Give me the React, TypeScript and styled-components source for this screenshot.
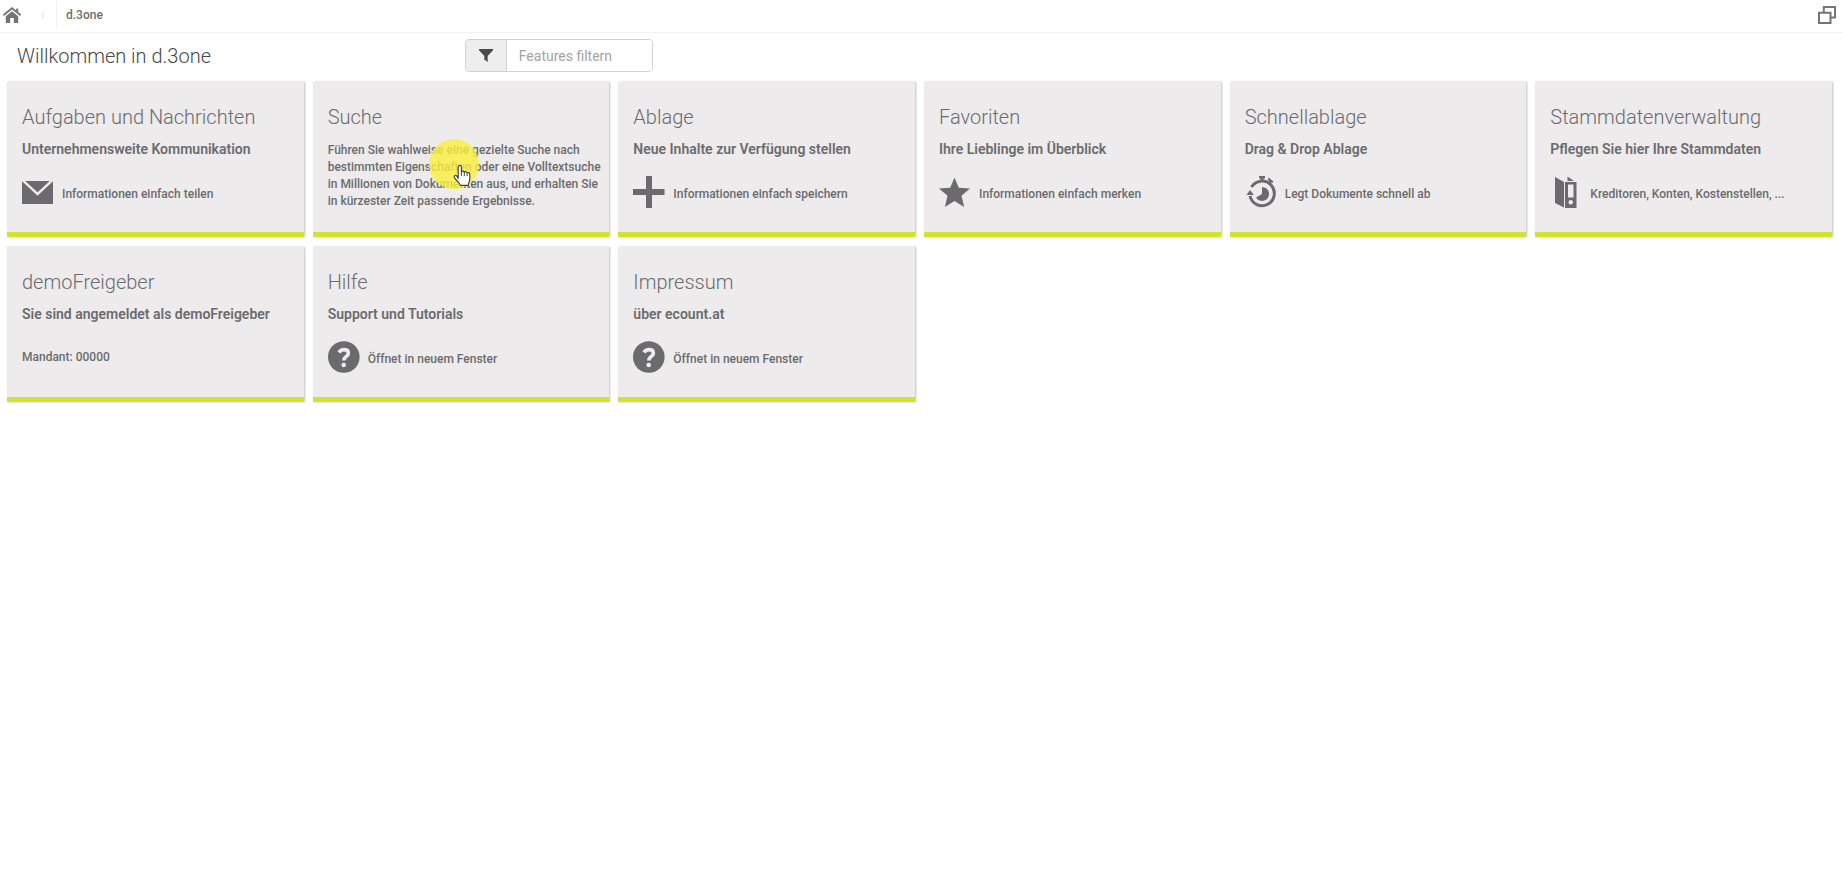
import React from "react";
import styled, { createGlobalStyle } from "styled-components";

const GlobalStyle = createGlobalStyle`
  *, *::before, *::after { box-sizing: border-box; }
  body {
    margin: 0;
    background: #fff;
    color: #6b6b6e;
    font-family: Roboto, "Liberation Sans", sans-serif;
  }
`;

const TopBar = styled.header`
  display: flex;
  align-items: center;
  height: 33px;
  padding: 0 7px 3px 2px;
  border-bottom: 1px solid #f2f2f2;
`;

const IconButton = styled.button`
  display: flex;
  padding: 0;
  border: 0;
  background: none;
  color: #757575;
  cursor: pointer;
`;

const Back = styled(IconButton)`
  margin: 0 11px 0 19px;
  color: #dcdcdc;
`;

const Crumb = styled.a`
  padding-left: 9px;
  border-left: 1px solid #f0f0f0;
  color: #6e6e6e;
  font-size: 12px;
  font-weight: 500;
  line-height: 28px;
  text-decoration: none;
`;

const Spacer = styled.div`
  flex: 1;
`;

const HeadingRow = styled.div`
  display: grid;
  grid-template-columns: 1fr 3fr;
  align-items: center;
  padding: 6px 0 10px;
`;

const Heading = styled.h1`
  margin: 0;
  padding-left: 17px;
  color: #484848;
  font-size: 20px;
  font-weight: 300;
  line-height: 24px;
`;

const Filter = styled.label`
  display: flex;
  width: 188px;
  height: 33px;
  margin-left: 4px;
  overflow: hidden;
  border: 1px solid #d2d2d2;
  border-radius: 4px;
`;

const FilterAddon = styled.span`
  display: flex;
  flex: none;
  align-items: center;
  justify-content: center;
  width: 41px;
  border-right: 1px solid #d2d2d2;
  background: #eee;
  color: #4a4a4a;
`;

const FilterInput = styled.input`
  flex: 1;
  min-width: 0;
  padding: 0 12px;
  border: 0;
  outline: 0;
  color: #555;
  font: 400 14px Roboto, "Liberation Sans", sans-serif;
  &::placeholder { color: #a3a3a3; opacity: 1; }
`;

const Tiles = styled.main`
  display: grid;
  grid-template-columns: repeat(6, 1fr);
  gap: 10px 9px;
  padding: 0 11px 8px 7px;
`;

const Tile = styled.a`
  position: relative;
  display: block;
  min-height: 155px;
  padding: 23px 8px 19px 15px;
  border-bottom: 5px solid #d1e231;
  background: #edebec;
  box-shadow: 1px 0 2px rgba(0, 0, 0, 0.25);
  color: inherit;
  text-decoration: none;
`;

const TileTitle = styled.h2`
  margin: 0 0 10px;
  color: #6b6b6e;
  font-size: 20px;
  font-weight: 300;
  line-height: 24px;
`;

const TileSubtitle = styled.p`
  margin: 0 0 17px;
  font-size: 14px;
  font-weight: 600;
  line-height: 20px;
`;

const TileText = styled.p`
  margin: 0;
  padding-top: 3px;
  font-size: 12px;
  font-weight: 500;
  line-height: 17px;
`;

const Meta = styled.div`
  display: flex;
  align-items: flex-end;
  gap: 8px;
  height: 32px;
  font-size: 12px;
  font-weight: 500;
`;

const MetaText = styled.span<{ $plain?: boolean }>`
  line-height: ${(p) => (p.$plain ? 32 : 28)}px;
  white-space: nowrap;
`;

const Highlight = styled.span`
  position: absolute;
  top: 57px;
  left: 116px;
  width: 50px;
  height: 50px;
  border-radius: 50%;
  background: rgba(250, 240, 60, 0.8);
`;

const Pointer = styled.svg`
  position: absolute;
  top: 25px;
  left: 23px;
`;

const paths = {
  mail: (
    <>
      <path d="M0 5h31v23H0z" />
      <path d="M0 3.500L15.500 18 31 3.500" fill="none" stroke="#edebec" strokeWidth="2.400" />
      <path d="M3.500 5h24L15.500 16z" />
    </>
  ),
  plus: <path d="M13 0h6v13h12.500v6H19v13h-6V19H0v-6h13z" />,
  star: <path d="M15.500 1.500l4.300 10.200 11.200.9-8.500 7.200 2.700 11.200-9.700-6-9.600 6 2.600-11.200L0 12.600l11.200-.9z" />,
  watch: (
    <>
      <path d="M14 0h6v2.500h-1.500V6h-3V2.500H14zM23.500 1.500l5 4-1.200 1.500-1.300-.6-1.700 2-2-1.700 1.500-2-.8-1.200z" />
      <path d="M6.500 11A12.300 12.300 0 1 1 5 20" fill="none" stroke="currentColor" strokeWidth="3" />
      <path d="M1.500 19l3.500-5 4 5z" />
      <path d="M17 11a7 7 0 1 1-6 10.500l6-3.500z" />
    </>
  ),
  binder: (
    <>
      <path d="M5 1l9 5v25.500l-9-4.500zM17.500.500L24 5h-6.500z" />
      <path fillRule="evenodd" d="M15 6h11.500v26H15zM18 8.500v13h5.500v-13zM20.750 24a2.250 2.250 0 1 0 0 4.500 2.250 2.250 0 0 0 0-4.500z" />
    </>
  ),
  help: (
    <>
      <circle cx="15.800" cy="16" r="15.800" />
      <path d="M11 11.500c1.200-2 2.800-2.900 5-2.900 2.800 0 4.400 1.500 4.400 3.600 0 3.200-4.600 3.400-4.600 7.300" fill="none" stroke="#edebec" strokeWidth="3.600" />
      <circle cx="15.700" cy="24" r="2.300" fill="#edebec" />
    </>
  ),
};

type IconName = keyof typeof paths;

const TileIcon = ({ name }: { name: IconName }) => (
  <svg width="32" height="32" viewBox="0 0 32 32" fill="currentColor" aria-hidden="true">
    {paths[name]}
  </svg>
);

interface TileData {
  title: string;
  subtitle?: string;
  text?: string;
  icon?: IconName;
  meta?: string;
  active?: boolean;
}

const tiles: TileData[] = [
  { title: "Aufgaben und Nachrichten", subtitle: "Unternehmensweite Kommunikation", icon: "mail", meta: "Informationen einfach teilen" },
  {
    title: "Suche",
    text: "Führen Sie wahlweise eine gezielte Suche nach bestimmten Eigenschaften oder eine Volltextsuche in Millionen von Dokumenten aus, und erhalten Sie in kürzester Zeit passende Ergebnisse.",
    active: true,
  },
  { title: "Ablage", subtitle: "Neue Inhalte zur Verfügung stellen", icon: "plus", meta: "Informationen einfach speichern" },
  { title: "Favoriten", subtitle: "Ihre Lieblinge im Überblick", icon: "star", meta: "Informationen einfach merken" },
  { title: "Schnellablage", subtitle: "Drag & Drop Ablage", icon: "watch", meta: "Legt Dokumente schnell ab" },
  { title: "Stammdatenverwaltung", subtitle: "Pflegen Sie hier Ihre Stammdaten", icon: "binder", meta: "Kreditoren, Konten, Kostenstellen, ..." },
  { title: "demoFreigeber", subtitle: "Sie sind angemeldet als demoFreigeber", meta: "Mandant: 00000" },
  { title: "Hilfe", subtitle: "Support und Tutorials", icon: "help", meta: "Öffnet in neuem Fenster" },
  { title: "Impressum", subtitle: "über ecount.at", icon: "help", meta: "Öffnet in neuem Fenster" },
];

const PointerMark = () => (
  <Highlight aria-hidden="true">
    <Pointer width="20" height="24" viewBox="0 0 20 24">
      <path
        d="M6.200 14.500V3.200c0-2.500 3.200-2.500 3.200 0V8c.3-1.200 2.700-1.200 2.900.5.500-1.200 2.600-1 2.800.6.700-.9 2.700-.7 2.700 1.300V15c0 2.500-1.300 3.600-1.600 6.300H8.400c-.6-2.400-3.700-4.400-5.800-7.400-1.200-1.900.8-3.300 2.200-1.900z"
        fill="#fff"
        stroke="#444"
        strokeWidth="1.200"
        strokeLinejoin="round"
      />
      <path d="M9.400 8v4M12.300 8.500V12M15.100 9.500V12" stroke="#444" />
    </Pointer>
  </Highlight>
);

export default function App() {
  return (
    <>
      <GlobalStyle />
      <TopBar>
        <IconButton aria-label="Startseite">
          <svg width="20" height="18" viewBox="0 0 20 18" fill="currentColor">
            <path d="M10 1L.800 8.600l1.200 1.500L10 3.500l8 6.600 1.200-1.500-3-2.500V2.500h-2v2z" />
            <path d="M10 5.200l6.200 5.100V17h-4.400v-5H8.200v5H3.800v-6.700z" />
          </svg>
        </IconButton>
        <Back aria-label="Zurück">
          <svg width="4" height="8" viewBox="0 0 4 8" fill="none" stroke="currentColor">
            <path d="M3 1L1 4l2 3" />
          </svg>
        </Back>
        <Crumb href="#">d.3one</Crumb>
        <Spacer />
        <IconButton aria-label="Fenster">
          <svg width="18" height="18" viewBox="0 0 18 18" fill="#fff" stroke="currentColor" strokeWidth="2">
            <path d="M5.800 1h11.200v10.500H5.800z" />
            <path d="M1 6.800h11.500v10.200H1z" />
          </svg>
        </IconButton>
      </TopBar>
      <HeadingRow>
        <Heading>Willkommen in d.3one</Heading>
        <Filter>
          <FilterAddon>
            <svg width="14" height="13" viewBox="0 0 14 13" fill="currentColor" aria-hidden="true">
              <path d="M0 0h14v1.200L8.700 7v6L5.300 10.500V7L0 1.200z" />
            </svg>
          </FilterAddon>
          <FilterInput type="text" placeholder="Features filtern" aria-label="Features filtern" />
        </Filter>
      </HeadingRow>
      <Tiles>
        {tiles.map((t) => (
          <Tile href="#" key={t.title}>
            <TileTitle>{t.title}</TileTitle>
            {t.subtitle && <TileSubtitle>{t.subtitle}</TileSubtitle>}
            {t.text && <TileText>{t.text}</TileText>}
            {t.meta && (
              <Meta>
                {t.icon && <TileIcon name={t.icon} />}
                <MetaText $plain={!t.icon}>{t.meta}</MetaText>
              </Meta>
            )}
            {t.active && <PointerMark />}
          </Tile>
        ))}
      </Tiles>
    </>
  );
}
